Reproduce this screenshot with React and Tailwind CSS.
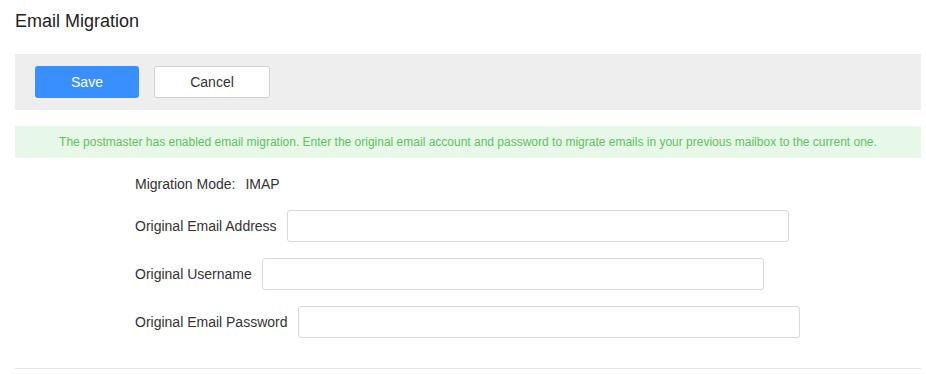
export default function App() {
    const fields = [
        { label: 'Original Email Address', type: 'text' },
        { label: 'Original Username', type: 'text' },
        { label: 'Original Email Password', type: 'password' },
    ];

    return (
        <div className="min-h-[374px] bg-white pl-[15px] pr-[5px] font-['Liberation_Sans',Arial,sans-serif] text-[#333]">
            <h1 className="pt-[9px] text-[18px] leading-6 text-[#222]">Email Migration</h1>

            {/* Toolbar */}
            <div className="mt-[21px] flex h-14 items-center gap-[15px] bg-[#eeeeee] px-5">
                <button className="h-8 w-[104px] rounded-[3px] bg-[#3a8ffe] text-[14px] text-white">
                    Save
                </button>
                <button className="h-8 w-[116px] rounded-[3px] border border-[#d0d0d0] bg-white text-[14px] text-[#333]">
                    Cancel
                </button>
            </div>

            {/* Notice */}
            <div className="mt-4 flex h-8 items-center justify-center bg-[#e8f8e8] text-[12px] text-[#5cc35c]">
                The postmaster has enabled email migration. Enter the original email account and password to migrate emails in your previous mailbox to the current one.
            </div>

            {/* Form */}
            <div className="pl-[120px]">
                <div className="mt-[10px] flex h-8 items-center gap-[10px] text-[14px]">
                    <span>Migration Mode:</span>
                    <span>IMAP</span>
                </div>
                {fields.map((f, i) => (
                    <div key={f.label} className={`flex h-8 items-center gap-[10px] text-[14px] ${i === 0 ? 'mt-[10px]' : 'mt-4'}`}>
                        <label>{f.label}</label>
                        <input
                            type={f.type}
                            className="h-8 w-[502px] rounded-[3px] border border-[#d9d9d9] bg-white px-2 text-[14px] outline-none"
                        />
                    </div>
                ))}
            </div>

            <div className="mt-[30px] border-t border-[#e5e5e5]" />
        </div>
    );
}
